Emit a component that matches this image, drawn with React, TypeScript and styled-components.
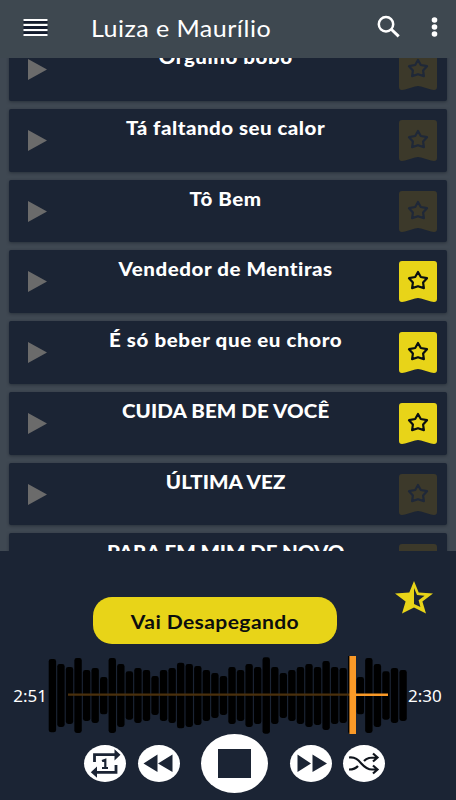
import React from 'react';
import styled, { createGlobalStyle } from 'styled-components';

const navy = '#1b2434';
const yellow = '#e8d418';

const GlobalStyle = createGlobalStyle`
  * { box-sizing: border-box; }
  body { margin: 0; background: ${navy}; }
`;

const Screen = styled.main`
  width: 456px;
  height: 800px;
  overflow: hidden;
  display: flex;
  flex-direction: column;
  background: ${navy};
  font-family: Lato, "Liberation Sans", sans-serif;
  color: #fff;
`;

const Toolbar = styled.header`
  flex: 0 0 58px;
  display: flex;
  align-items: center;
  padding: 0 18px 4px 23px;
  background: #3e4850;
`;

const IconButton = styled.button`
  display: flex;
  padding: 0;
  border: 0;
  background: none;
`;

const AppTitle = styled.h1`
  flex: 1;
  margin: 2px 0 0 42px;
  font-size: 23px;
  line-height: 30px;
  font-weight: 400;
  letter-spacing: 0.4px;
  transform: scaleX(1.09);
  transform-origin: left center;
  white-space: nowrap;
`;

const Actions = styled.div`
  display: flex;
  align-items: center;
  gap: 31px;
`;

const SongList = styled.section`
  flex: 0 0 493px;
  overflow: hidden;
  display: flex;
  flex-direction: column;
  justify-content: flex-start;
  gap: 8px;
  padding: 0 9px;
  background: #3f4852;
`;

const SongCard = styled.article<{ $first: boolean }>`
  flex: 0 0 62.7px;
  margin-top: ${p => (p.$first ? '-19.6px' : '0')};
  display: grid;
  grid-template-columns: 28px 1fr 38px;
  padding: 0 10px 0 19px;
  border-radius: 2px;
  background: ${navy};
  box-shadow: 0 1px 3px rgba(20, 27, 38, 0.5);
`;

const PlayMark = styled.svg`
  width: 19px;
  height: 21px;
  margin-top: 21px;
`;

const SongTitle = styled.h2<{ $spacing: number }>`
  margin: 6px 0 0 0;
  padding-right: 3.5px;
  text-align: center;
  font-size: 19px;
  line-height: 26px;
  font-weight: 900;
  letter-spacing: ${p => p.$spacing}px;
  transform: scaleX(1.08);
  white-space: nowrap;
`;

const Ribbon = styled.svg`
  width: 38px;
  height: 41px;
  margin-top: 11px;
`;

const Player = styled.section`
  flex: 1;
  display: flex;
  flex-direction: column;
  background: ${navy};
`;

const NowPlayingRow = styled.div`
  display: grid;
  grid-template-columns: 244px 38px;
  column-gap: 58px;
  padding: 30px 0 0 93px;
  height: 105px;
`;

const NowPlaying = styled.button`
  height: 47px;
  margin-top: 16px;
  padding: 2px 0 0;
  border: 0;
  border-radius: 19px;
  background: ${yellow};
  color: #0c0e0e;
  font: 700 19px/24px Lato, sans-serif;
  letter-spacing: 0.35px;
`;

const ButtonLabel = styled.span`
  display: block;
  transform: scaleX(1.11);
`;

const Timeline = styled.div`
  height: 80px;
  display: grid;
  grid-template-columns: 48px 360px 48px;
  align-items: center;
`;

const Time = styled.time<{ $end?: boolean }>`
  font: 400 17px/20px "Noto Sans", sans-serif;
  text-align: ${p => (p.$end ? 'left' : 'right')};
  padding-right: ${p => (p.$end ? 0 : 1)}px;
`;

const Controls = styled.div`
  display: flex;
  align-items: center;
  height: 60px;
  margin-top: -3px;
  padding-left: 84px;
`;

const Round = styled.button<{ $large?: boolean; $gap?: number }>`
  display: flex;
  width: ${p => (p.$large ? 67 : 42)}px;
  height: ${p => (p.$large ? 59 : 37)}px;
  margin-left: ${p => p.$gap ?? 0}px;
  padding: 0;
  border: 0;
  border-radius: 50%;
  background: #fff;
`;

const songs = [
  { title: 'Orgulho bobo', saved: false, spacing: 0.5 },
  { title: 'Tá faltando seu calor', saved: false, spacing: 0.45 },
  { title: 'Tô Bem', saved: false, spacing: 0.5 },
  { title: 'Vendedor de Mentiras', saved: true, spacing: 0.5 },
  { title: 'É só beber que eu choro', saved: true, spacing: 0.55 },
  { title: 'CUIDA BEM DE VOCÊ', saved: true, spacing: 0.08 },
  { title: 'ÚLTIMA VEZ', saved: false, spacing: 0.08 },
  { title: 'PARA EM MIM DE NOVO', saved: false, spacing: -0.1 },
];

// Top and bottom of each bar, in thirds of a pixel.
const bars = [
  [42, 262], [57, 246], [66, 237], [39, 264], [75, 228], [69, 234], [96, 208],
  [39, 264], [57, 246], [79, 224], [69, 234], [75, 228], [93, 210], [75, 228],
  [69, 234], [53, 250], [57, 246], [63, 240], [75, 228], [84, 219], [93, 210],
  [66, 237], [75, 228], [57, 246], [66, 237], [37, 266], [66, 237], [84, 219],
  [75, 228], [66, 237], [57, 246], [66, 240], [48, 255], [66, 237], [69, 234],
  [27, 267], [96, 208], [39, 264], [57, 246], [79, 224], [69, 234], [75, 228],
];

const SavedRibbon = ({ active }: { active: boolean }) => (
  <Ribbon viewBox="0 0 38 41">
    <path d="M3 0H35Q38 0 38 3V38Q38 41 35 41L32 40.5L22 37.5Q19 36.5 16 37.5L6 40.5L3 41Q0 41 0 38V3Q0 0 3 0Z" fill={active ? yellow : '#3c392a'} />
    <path d="M19 11L21.8 16L28 17.2L24.1 21.6L24.9 27.1L19 25.2L13.1 27.1L13.9 21.6L10 17.2L16.2 16Z" fill="none" stroke={active ? '#090f12' : '#1f2838'} strokeWidth="2.2" strokeLinejoin="round" />
  </Ribbon>
);

const Waveform = () => (
  <svg width="360" height="80" viewBox="0 0 360 80">
    {bars.map(([top, bottom], i) => (
      <rect key={i} x={0.7 + i * 8.553} y={top / 3 - 11} width="7.4" height={(bottom - top) / 3} rx="2.4" fill="#000" />
    ))}
    <path d="M20 38.7H302" stroke="#4b300d" strokeWidth="2.3" />
    <path d="M307 38.7H340" stroke="#fa9927" strokeWidth="2.4" />
    <path d="M304.7 -1V78" stroke="#fa9927" strokeWidth="6.6" />
  </svg>
);

export default function App() {
  return (
    <Screen>
      <GlobalStyle />
      <Toolbar>
        <IconButton aria-label="Menu">
          <svg width="26" height="18" viewBox="0 0 26 18">
            <path d="M.5 3.2H24.5M.5 9.2H24.5M.5 15.2H24.5" stroke="#141c2e" strokeWidth="3.5" />
            <path d="M.5 2H24.5M.5 7H24.5M.5 12H24.5M.5 17H24.5" stroke="#fff" strokeWidth="2" />
          </svg>
        </IconButton>
        <AppTitle>Luiza e Maurílio</AppTitle>
        <Actions>
          <IconButton aria-label="Buscar">
            <svg width="24" height="24" viewBox="0 0 24 24">
              <circle cx="10" cy="9.3" r="7.2" fill="none" stroke="#fff" strokeWidth="2.5" />
              <path d="M15 14L22.7 21.3" stroke="#fff" strokeWidth="3" />
            </svg>
          </IconButton>
          <IconButton aria-label="Mais">
            <svg width="7" height="20" viewBox="0 0 7 20" fill="#fff">
              <circle cx="3.5" cy="3" r="2.8" /><circle cx="3.5" cy="10" r="2.8" /><circle cx="3.5" cy="17" r="2.8" />
            </svg>
          </IconButton>
        </Actions>
      </Toolbar>
      <SongList>
        {songs.map((song, i) => (
          <SongCard key={song.title} $first={i === 0}>
            <PlayMark viewBox="0 0 19 21"><path d="M0 0L19 10.4L0 21Z" fill="#6b6b6b" /></PlayMark>
            <SongTitle $spacing={song.spacing}>{song.title}</SongTitle>
            <SavedRibbon active={song.saved} />
          </SongCard>
        ))}
      </SongList>
      <Player>
        <NowPlayingRow>
          <NowPlaying><ButtonLabel>Vai Desapegando</ButtonLabel></NowPlaying>
          <svg width="38" height="33" viewBox="0 0 38 33">
            <path d="M19 0L23.7 11.5L38 12.4L27.4 20.5L31 32.5L19 26.4L7 32.5L10.6 20.5L0 12.4L14.3 11.5Z" fill={yellow} />
            <path d="M19 7V23L25.4 26L23.6 19.2L29.6 14.8L22 14Z" fill={navy} />
          </svg>
        </NowPlayingRow>
        <Timeline>
          <Time>2:51</Time>
          <Waveform />
          <Time $end>2:30</Time>
        </Timeline>
        <Controls>
          <Round aria-label="Repetir">
            <svg width="42" height="37" viewBox="0 0 42 37">
              <path d="M10.5 17V9.7H31M32 20V27.3H12" fill="none" stroke={navy} strokeWidth="2.8" />
              <path d="M30.5 4.2L36.5 9.7L30.5 15.5ZM13 21.5L6.8 27.3L13 32.8Z" fill={navy} />
              <path d="M18 16L21.3 14.8V23M18 23H24" fill="none" stroke={navy} strokeWidth="2.2" />
            </svg>
          </Round>
          <Round $gap={11.5} aria-label="Voltar">
            <svg width="42" height="37" viewBox="0 0 42 37"><path d="M19.5 9.5V27L5.5 18.5ZM34.5 9.5V27L20 18.5Z" fill={navy} /></svg>
          </Round>
          <Round $large $gap={21.5} aria-label="Parar">
            <svg width="67" height="59" viewBox="0 0 67 59"><path d="M17 15H50V44H17Z" fill={navy} /></svg>
          </Round>
          <Round $gap={21.5} aria-label="Avançar">
            <svg width="42" height="37" viewBox="0 0 42 37"><path d="M7.5 9.5V27L21 18.5ZM22.5 9.5V27L37 18.5Z" fill={navy} /></svg>
          </Round>
          <Round $gap={11.5} aria-label="Aleatório">
            <svg width="42" height="37" viewBox="0 0 42 37" fill="none" stroke="#10151d" strokeWidth="2.2">
              <path d="M6 12.5C18 11 18 24.5 29 24.5H34M6 24.5C10.5 24.5 13 23.3 15 21M21 16C24 12.7 27 12.5 34 12.5M30 8.5L34.5 12.5L30 16.5M30 20.5L34.5 24.5L30 28.5" />
            </svg>
          </Round>
        </Controls>
      </Player>
    </Screen>
  );
}
